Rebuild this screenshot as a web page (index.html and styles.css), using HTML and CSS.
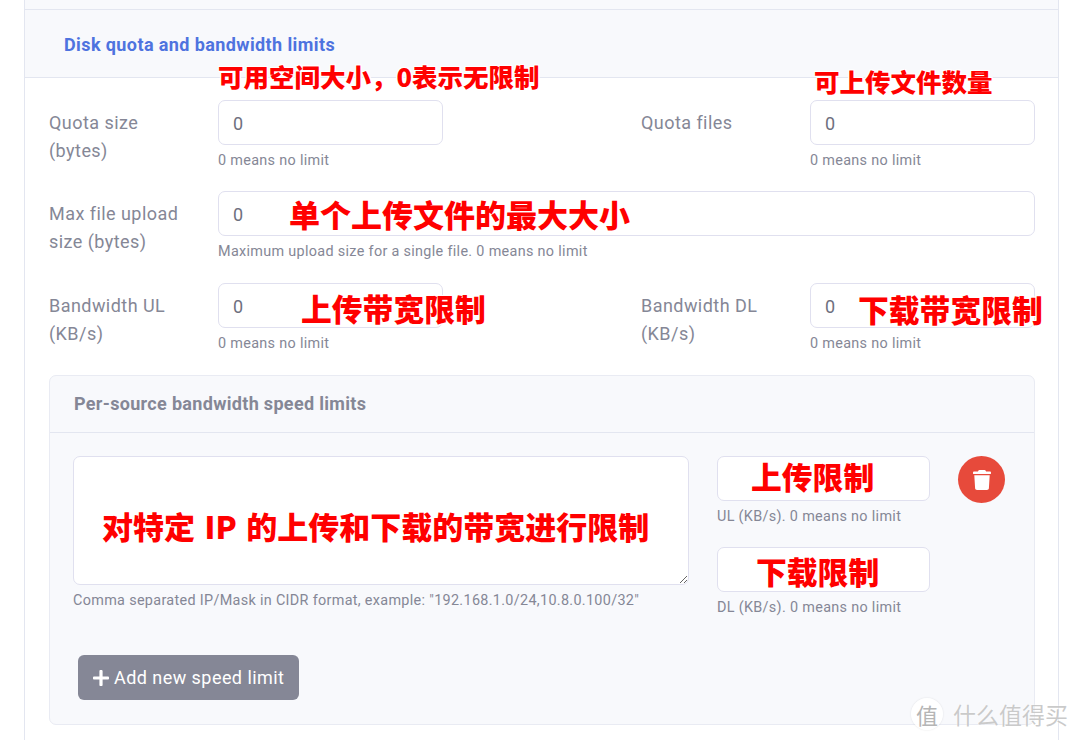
FILE: index.html
```html
<!DOCTYPE html>
<html lang="zh-CN">
<head>
  <meta charset="UTF-8">
  <meta name="viewport" content="width=device-width, initial-scale=1.0">
  <title>Disk quota and bandwidth limits</title>
  <link rel="stylesheet" href="styles.css">
</head>
<body>
  <div class="page">
    <div class="card">
      <div class="card-strip"></div>
      <div class="card-header">
        <h6>Disk quota and bandwidth limits</h6>
      </div>
      <div class="card-body">

        <div class="form-row form-row-first">
          <label class="field-label">Quota size (bytes)</label>
          <div class="field">
            <input class="text-input" type="text" value="0">
            <small>0 means no limit</small>
          </div>
          <div class="row-spacer"></div>
          <label class="field-label">Quota files</label>
          <div class="field">
            <input class="text-input" type="text" value="0">
            <small>0 means no limit</small>
          </div>
        </div>

        <div class="form-row">
          <label class="field-label">Max file upload size (bytes)</label>
          <div class="field field-wide">
            <input class="text-input" type="text" value="0">
            <small>Maximum upload size for a single file. 0 means no limit</small>
          </div>
        </div>

        <div class="form-row">
          <label class="field-label">Bandwidth UL (KB/s)</label>
          <div class="field">
            <input class="text-input" type="text" value="0">
            <small>0 means no limit</small>
          </div>
          <div class="row-spacer"></div>
          <label class="field-label">Bandwidth DL (KB/s)</label>
          <div class="field">
            <input class="text-input" type="text" value="0">
            <small>0 means no limit</small>
          </div>
        </div>

        <div class="panel">
          <div class="panel-header">Per-source bandwidth speed limits</div>
          <div class="panel-body">
            <div class="limit-row">
              <div class="limit-sources">
                <textarea class="text-area"></textarea>
                <small>Comma separated IP/Mask in CIDR format, example: "192.168.1.0/24,10.8.0.100/32"</small>
              </div>
              <div class="limit-values">
                <div class="limit-value">
                  <input class="text-input" type="text">
                  <small>UL (KB/s). 0 means no limit</small>
                </div>
                <div class="limit-value">
                  <input class="text-input" type="text">
                  <small>DL (KB/s). 0 means no limit</small>
                </div>
              </div>
              <button class="delete-btn" type="button" aria-label="Delete">
                <svg width="18" height="20" viewBox="0 0 18 20"><path fill="#fff" d="M6.400 0h5.200c.5 0 .9.3 1.100.7l.4.8h4c.5 0 .9.4.9.9v1c0 .3-.2.5-.5.5H.5C.2 4 0 3.800 0 3.500v-1c0-.5.4-.9.900-.9h4l.4-.8C5.500.3 5.900 0 6.400 0zM1.300 5.300h15.400l-.8 13c-.1 1-.9 1.700-1.900 1.700H4c-1 0-1.800-.7-1.900-1.700l-.8-13z"/></svg>
              </button>
            </div>
            <button class="add-btn" type="button">
              <svg width="16" height="16" viewBox="0 0 16 16"><path fill="#fff" d="M6.400 1.100C6.400.5 6.900 0 7.500 0h1c.6 0 1.100.5 1.100 1.100v5.300h5.300c.6 0 1.100.5 1.100 1.100v1c0 .6-.5 1.100-1.100 1.100H9.600v5.300c0 .6-.5 1.100-1.100 1.100h-1c-.6 0-1.100-.5-1.100-1.100V9.600H1.100C.5 9.600 0 9.100 0 8.500v-1c0-.6.5-1.100 1.100-1.100h5.300z"/></svg>
              Add new speed limit
            </button>
          </div>
        </div>

      </div>
    </div>

    <!-- red notes pasted on top of the screenshot -->
    <span class="note note-quota">可用空间大小，0表示无限制</span>
    <span class="note note-files">可上传文件数量</span>
    <span class="note note-max">单个上传文件的最大大小</span>
    <span class="note note-ul">上传带宽限制</span>
    <span class="note note-dl">下载带宽限制</span>
    <span class="note note-ip">对特定 IP 的上传和下载的带宽进行限制</span>
    <span class="note note-up">上传限制</span>
    <span class="note note-down">下载限制</span>

    <div class="watermark">
      <span class="watermark-badge">值</span>
      <span class="watermark-text">什么值得买</span>
    </div>
  </div>
</body>
</html>
```

FILE: styles.css
```css
* {
  box-sizing: border-box;
}

body {
  margin: 0;
  background-color: #fff;
  font-family: Roboto, "Noto Sans CJK SC", sans-serif;
  letter-spacing: 0.02em; /* text in the shot runs a bit wider than plain Roboto */
  color: #858796;
}

.page {
  position: relative;
  width: 1080px;
  height: 740px;
  overflow: hidden;
}

.card {
  width: 1035px;
  height: 100%;
  margin-left: 24px;
  border-left: 1px solid #e3e6f0;
  border-right: 1px solid #e3e6f0;
}

.card-strip {
  height: 10px;
  background-color: #f8f9fc;
  border-bottom: 1px solid #e3e6f0;
}

.card-header {
  height: 68px;
  padding: 25px 0 0 39px;
  background-color: #f8f9fc;
  border-bottom: 1px solid #e3e6f0;
}

.card-header h6 {
  margin: 0;
  font-size: 18px;
  line-height: 20px;
  font-weight: 700;
  letter-spacing: 0.4px;
  color: #4e73df;
}

.card-body {
  padding: 22px 23px 0 24px;
}

.form-row {
  display: flex;
  height: 92px;
}

.form-row-first {
  height: 91px;
}

.field-label {
  width: 169px;
  padding: 9px 30px 0 0;
  font-size: 18px;
  line-height: 28px;
  letter-spacing: 0.45px;
}

.field {
  width: 225px;
}

.field-wide {
  flex: 1;
}

.row-spacer {
  width: 198px;
}

.text-input,
.text-area {
  display: block;
  width: 100%;
  border: 1px solid #e0e0ef;
  border-radius: 7px;
  background-color: #fff;
  font-family: inherit;
  color: #6e707e;
}

.text-input {
  height: 45px;
  padding: 2px 14px 0;
  font-size: 18px;
}

.text-area {
  height: 129px;
}

small {
  display: block;
  margin-top: 7px;
  font-size: 14.400px;
  line-height: 18px;
  color: #858796;
}

.panel {
  width: 986px;
  height: 350px;
  background-color: #f8f9fc;
  border: 1px solid #e9ebf3;
  border-radius: 7px;
}

.panel-header {
  height: 57px;
  padding: 18px 0 0 24px;
  font-size: 18px;
  line-height: 20px;
  font-weight: 700;
  border-bottom: 1px solid #e3e6f0;
}

.panel-body {
  padding: 23px 0 0 23px;
}

.limit-row {
  display: flex;
  align-items: flex-start;
}

.limit-sources {
  width: 616px;
}

.limit-values {
  width: 213px;
  margin-left: 28px;
}

.limit-value {
  height: 91px;
}

.limit-value .text-input {
  height: 45px;
}

.delete-btn {
  display: flex;
  align-items: center;
  justify-content: center;
  width: 47px;
  height: 47px;
  margin-left: 28px;
  padding: 0;
  border: none;
  border-radius: 50%;
  background-color: #e74a3b;
}

.add-btn {
  display: flex;
  align-items: center;
  gap: 5px;
  width: 221px;
  height: 45px;
  margin: 17px 0 0 5px;
  padding: 0 0 0 15px;
  border: none;
  border-radius: 6px;
  background-color: #858796;
  font-family: inherit;
  font-size: 18px;
  letter-spacing: 0.45px;
  color: #fff;
}

.note {
  position: absolute;
  font-family: "Noto Sans CJK SC", sans-serif;
  font-weight: 900;
  line-height: 1.2;
  letter-spacing: 0;
  white-space: pre;
  color: #f00;
  text-shadow: 1px 0 0 #fff, -1px 0 0 #fff, 0 1px 0 #fff, 0 -1px 0 #fff,
    1px 1px 0 #fff, -1px -1px 0 #fff, 1px -1px 0 #fff, -1px 1px 0 #fff,
    0 0 3px #fff;
}

.note-quota { left: 218px; top: 61px; font-size: 25.500px; }
.note-files { left: 814px; top: 66px; font-size: 25.500px; }
.note-max { left: 289px; top: 195px; font-size: 31px; }
.note-ul { left: 301px; top: 290px; font-size: 30.800px; }
.note-dl { left: 858px; top: 291px; font-size: 30.800px; }
.note-ip { left: 102px; top: 507px; font-size: 31px; word-spacing: 2.500px; }
.note-up { left: 751px; top: 458px; font-size: 30.800px; }
.note-down { left: 756px; top: 553px; font-size: 30.800px; }

.watermark {
  position: absolute;
  left: 911px;
  top: 698px;
  display: flex;
  align-items: center;
  gap: 10px;
}

.watermark-badge {
  display: flex;
  align-items: center;
  justify-content: center;
  width: 32px;
  height: 32px;
  border-radius: 50%;
  background-color: rgba(255, 255, 255, 0.9);
  box-shadow: 0 0 2px rgba(0, 0, 0, 0.12);
  font-family: "Noto Sans CJK SC", sans-serif;
  font-size: 22px;
  letter-spacing: 0;
  color: #b5b5b5;
}

.watermark-text {
  font-family: "Noto Sans CJK SC", sans-serif;
  font-size: 23px;
  line-height: 30px;
  letter-spacing: 0;
  color: rgba(185, 185, 185, 0.75);
  text-shadow: 0 0 2px #fff;
}
```
